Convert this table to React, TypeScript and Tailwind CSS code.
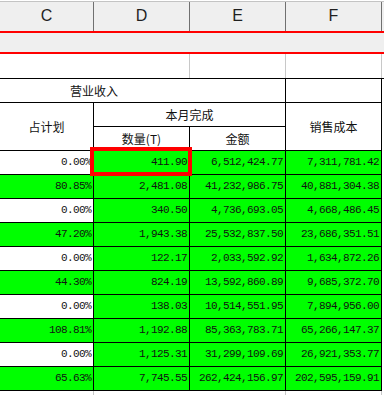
const ROWS = [
  { plan: '0.00%', qty: '411.90', amt: '6,512,424.77', cost: '7,311,781.42', hl: false },
  { plan: '80.85%', qty: '2,481.08', amt: '41,232,986.75', cost: '40,881,304.38', hl: true },
  { plan: '0.00%', qty: '340.50', amt: '4,736,693.05', cost: '4,668,486.45', hl: false },
  { plan: '47.20%', qty: '1,943.38', amt: '25,532,837.50', cost: '23,686,351.51', hl: true },
  { plan: '0.00%', qty: '122.17', amt: '2,033,592.92', cost: '1,634,872.26', hl: false },
  { plan: '44.30%', qty: '824.19', amt: '13,592,860.89', cost: '9,685,372.70', hl: true },
  { plan: '0.00%', qty: '138.03', amt: '10,514,551.95', cost: '7,894,956.00', hl: false },
  { plan: '108.81%', qty: '1,192.88', amt: '85,363,783.71', cost: '65,266,147.37', hl: true },
  { plan: '0.00%', qty: '1,125.31', amt: '31,299,109.69', cost: '26,921,353.77', hl: false },
  { plan: '65.63%', qty: '7,745.55', amt: '262,424,156.97', cost: '202,595,159.91', hl: true },
];

const COLS = 'grid grid-cols-[94px_96px_96px_96px_2px]';
const NUM = "flex h-[24px] items-center justify-end border-r border-b border-black pr-[2px] font-['Liberation_Mono',monospace] text-[11px] tracking-[-0.6px] text-[#111]";
const HEAD = "flex items-center justify-center border-r border-b border-black font-['Noto_Sans_CJK_SC',sans-serif] text-[12px] text-[#111]";

function ColumnHeaders() {
  return (
    <div className="pt-px">
      <div className={`${COLS} h-[30px] border-t border-[#c4c4c4] bg-[#efefef] font-['Liberation_Sans',sans-serif] text-[16px] text-[#1f1f1f]`}>
        {['C', 'D', 'E', 'F'].map((c) => (
          <div key={c} className="flex items-center justify-center border-r border-[#707070] pb-px">
            {c}
          </div>
        ))}
        <div />
      </div>
    </div>
  );
}

export default function App() {
  return (
    <div className="relative h-[395px] w-[384px] overflow-hidden bg-white">
      <ColumnHeaders />
      <div className="h-[2px] bg-[#ff0000]" />
      <div className="h-[19px] bg-[#efefef]" />
      <div className="h-[2px] bg-[#ff0000]" />

      {/* blank row above the report header */}
      <div className={`${COLS} h-[25px] border-b border-black`}>
        <div />
        <div className="border-r border-[#c8c8c8]" />
        <div className="border-r border-[#c8c8c8]" />
        <div className="border-r border-[#c8c8c8]" />
        <div />
      </div>

      {/* merged report header */}
      <div className={`${COLS} grid-rows-[24px_24px_24px]`}>
        <div className="col-start-1 col-span-3 row-start-1 flex items-center border-r border-b border-black pl-[70px] font-['Noto_Sans_CJK_SC',sans-serif] text-[12px] text-[#111]">
          营业收入
        </div>
        <div className="col-start-4 row-start-1 border-r border-b border-black" />
        <div className={`col-start-1 row-start-2 row-span-2 ${HEAD}`}>占计划</div>
        <div className={`col-start-2 col-span-2 row-start-2 ${HEAD}`}>本月完成</div>
        <div className={`col-start-4 row-start-2 row-span-2 ${HEAD}`}>销售成本</div>
        <div className={`col-start-2 row-start-3 ${HEAD}`}>数量(T)</div>
        <div className={`col-start-3 row-start-3 ${HEAD}`}>金额</div>
      </div>

      {ROWS.map((r, i) => (
        <div key={i} className={COLS}>
          <div className={`${NUM} ${r.hl ? 'bg-[#00ff00]' : 'bg-white'}`}>{r.plan}</div>
          <div className={`${NUM} bg-[#00ff00]`}>{r.qty}</div>
          <div className={`${NUM} bg-[#00ff00]`}>{r.amt}</div>
          <div className={`${NUM} bg-[#00ff00]`}>{r.cost}</div>
          <div />
        </div>
      ))}

      <div className={`${COLS} h-[10px]`}>
        <div className="border-r border-[#c8c8c8]" />
        <div />
        <div className="border-r border-[#c8c8c8]" />
        <div className="border-r border-[#c8c8c8]" />
        <div />
      </div>

      {/* selected cell outline */}
      <div className="absolute left-[90px] top-[147px] h-[29px] w-[102px] border-4 border-[#ff0000]" />
    </div>
  );
}
